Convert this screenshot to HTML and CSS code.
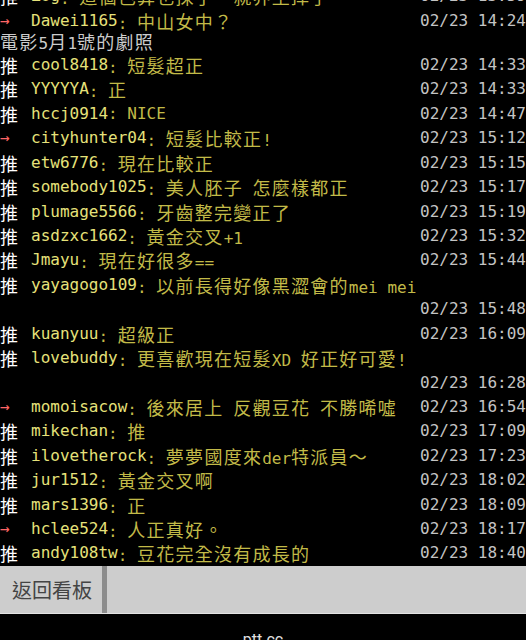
FILE: index.html
```html
<!DOCTYPE html>
<html lang="zh-Hant">
<head>
<meta charset="utf-8">
<title>ptt.cc</title>
<link rel="stylesheet" href="styles.css">
</head>
<body>
<div class="content">
  <div class="push"><span class="tag tag-push w">推</span><span class="uid">Zog</span><span class="ct">: <span class="w">這個色算也採了一就界坐掉了</span></span><span class="dt">02/23 13:59</span></div>
  <div class="push"><span class="tag tag-arrow">→</span><span class="uid">Dawei1165</span><span class="ct">: <span class="w">中山女中？</span></span><span class="dt">02/23 14:24</span></div>
  <div class="text"><span class="w">電影</span>5<span class="w">月</span>1<span class="w">號的劇照</span></div>
  <div class="push"><span class="tag tag-push w">推</span><span class="uid">cool8418</span><span class="ct">: <span class="w">短髮超正</span></span><span class="dt">02/23 14:33</span></div>
  <div class="push"><span class="tag tag-push w">推</span><span class="uid">YYYYYA</span><span class="ct">: <span class="w">正</span></span><span class="dt">02/23 14:33</span></div>
  <div class="push"><span class="tag tag-push w">推</span><span class="uid">hccj0914</span><span class="ct">: NICE</span><span class="dt">02/23 14:47</span></div>
  <div class="push"><span class="tag tag-arrow">→</span><span class="uid">cityhunter04</span><span class="ct">: <span class="w">短髮比較正</span>!</span><span class="dt">02/23 15:12</span></div>
  <div class="push"><span class="tag tag-push w">推</span><span class="uid">etw6776</span><span class="ct">: <span class="w">現在比較正</span></span><span class="dt">02/23 15:15</span></div>
  <div class="push"><span class="tag tag-push w">推</span><span class="uid">somebody1025</span><span class="ct">: <span class="w">美人胚子</span> <span class="w">怎麼樣都正</span></span><span class="dt">02/23 15:17</span></div>
  <div class="push"><span class="tag tag-push w">推</span><span class="uid">plumage5566</span><span class="ct">: <span class="w">牙齒整完變正了</span></span><span class="dt">02/23 15:19</span></div>
  <div class="push"><span class="tag tag-push w">推</span><span class="uid">asdzxc1662</span><span class="ct">: <span class="w">黃金交叉</span>+1</span><span class="dt">02/23 15:32</span></div>
  <div class="push"><span class="tag tag-push w">推</span><span class="uid">Jmayu</span><span class="ct">: <span class="w">現在好很多</span>==</span><span class="dt">02/23 15:44</span></div>
  <div class="push"><span class="tag tag-push w">推</span><span class="uid">yayagogo109</span><span class="ct">: <span class="w">以前長得好像黑澀會的</span>mei mei</span></div>
  <div class="push tail"><span class="dt">02/23 15:48</span></div>
  <div class="push"><span class="tag tag-push w">推</span><span class="uid">kuanyuu</span><span class="ct">: <span class="w">超級正</span></span><span class="dt">02/23 16:09</span></div>
  <div class="push"><span class="tag tag-push w">推</span><span class="uid">lovebuddy</span><span class="ct">: <span class="w">更喜歡現在短髮</span>XD <span class="w">好正好可愛</span>!</span></div>
  <div class="push tail"><span class="dt">02/23 16:28</span></div>
  <div class="push"><span class="tag tag-arrow">→</span><span class="uid">momoisacow</span><span class="ct">: <span class="w">後來居上</span> <span class="w">反觀豆花</span> <span class="w">不勝唏噓</span></span><span class="dt">02/23 16:54</span></div>
  <div class="push"><span class="tag tag-push w">推</span><span class="uid">mikechan</span><span class="ct">: <span class="w">推</span></span><span class="dt">02/23 17:09</span></div>
  <div class="push"><span class="tag tag-push w">推</span><span class="uid">ilovetherock</span><span class="ct">: <span class="w">夢夢國度來</span>der<span class="w">特派員～</span></span><span class="dt">02/23 17:23</span></div>
  <div class="push"><span class="tag tag-push w">推</span><span class="uid">jur1512</span><span class="ct">: <span class="w">黃金交叉啊</span></span><span class="dt">02/23 18:02</span></div>
  <div class="push"><span class="tag tag-push w">推</span><span class="uid">mars1396</span><span class="ct">: <span class="w">正</span></span><span class="dt">02/23 18:09</span></div>
  <div class="push"><span class="tag tag-arrow">→</span><span class="uid">hclee524</span><span class="ct">: <span class="w">人正真好。</span></span><span class="dt">02/23 18:17</span></div>
  <div class="push"><span class="tag tag-push w">推</span><span class="uid">andy108tw</span><span class="ct">: <span class="w">豆花完全沒有成長的</span></span><span class="dt">02/23 18:40</span></div>
</div>
<div class="bar">
  <div class="back">返回看板</div>
  <div class="sep"></div>
  <div class="fill"></div>
</div>
<div class="footer">ptt.cc</div>
</body>
</html>
```
FILE: styles.css
```css
html, body {
  margin: 0;
  padding: 0;
  background: #000;
}
body {
  width: 526px;
  height: 640px;
  overflow: hidden;
  font-family: "DejaVu Sans Mono", "Noto Sans CJK TC", monospace;
  font-size: 16px;
  color: #c4c4c4;
}
.content {
  margin-top: -15.8px;
}
.push {
  display: flex;
  height: 24.43px;
  line-height: 24.43px;
  white-space: pre;
  overflow: hidden;
}
.tag {
  width: 31px;
  flex: none;
}
.tag-push {
  color: #fff;
}
.tag-arrow {
  color: #ff6666;
}
.uid {
  color: #e6e27a;
}
.ct {
  color: #c2ba48;
  flex: 1;
}
.dt {
  color: #c4c4c4;
  flex: none;
}
.tail {
  justify-content: flex-end;
}
.w {
  font-family: "Noto Sans CJK TC", "Noto Sans CJK SC", sans-serif;
  font-size: 18px;
  letter-spacing: 1.26px;
}
.text {
  height: 16px;
  line-height: 16px;
  padding-bottom: 4px;
  white-space: pre;
  color: #cccccc;
}
.bar {
  display: flex;
  height: 47.3px;
  background: #cdcdcd;
  border-bottom: 1px solid #e4e4e4;
}
.back {
  width: 102px;
  display: flex;
  align-items: center;
  justify-content: center;
  padding-left: 2px;
  box-sizing: border-box;
  font-family: "Noto Sans CJK TC", sans-serif;
  font-size: 20px;
  color: #444;
}
.sep {
  width: 5px;
  background: #8c8c8c;
}
.fill {
  flex: 1;
}
.footer {
  text-align: center;
  font-family: Roboto, "Liberation Sans", sans-serif;
  font-size: 16px;
  color: #e0e0e0;
  padding-top: 16px;
}
```
